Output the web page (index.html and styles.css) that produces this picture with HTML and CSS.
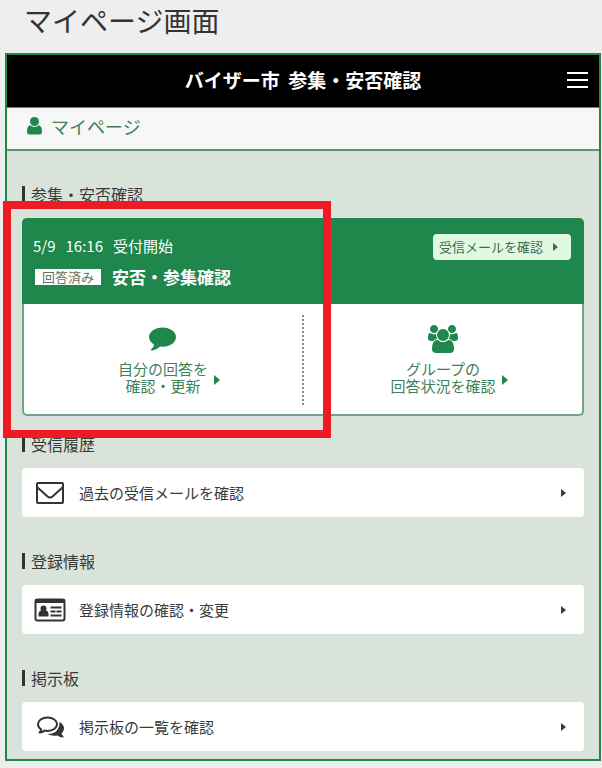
FILE: index.html
```html
<!DOCTYPE html>
<html lang="ja">
<head>
    <meta charset="UTF-8">
    <meta name="viewport" content="width=device-width, initial-scale=1.0">
    <title>マイページ画面</title>
    <link rel="stylesheet" href="styles.css">
</head>
<body>
    <h1 class="page-title">マイページ画面</h1>

    <div class="app">
        <header class="app-header">
            <h2 class="app-name">バイザー市 <span class="app-sub">参集・安否確認</span></h2>
            <button class="menu-btn" type="button" aria-label="メニュー">
                <span class="menu-line"></span>
                <span class="menu-line"></span>
                <span class="menu-line"></span>
            </button>
        </header>

        <div class="breadcrumb">
            <svg class="icon-user" viewBox="0 0 15 18" aria-hidden="true">
                <circle cx="7.500" cy="4.500" r="4.500"/>
                <path d="M3 8.300q4.500 3.400 9 0 3 .8 3 6.200 0 3-2.500 3h-10q-2.500 0-2.500-3 0-5.400 3-6.200z"/>
            </svg>
            <span>マイページ</span>
        </div>

        <main class="content">
            <h3 class="section-title">参集・安否確認</h3>
            <div class="card-wrap">
                <div class="card">
                    <div class="card-head">
                        <div>
                            <p class="card-time"><span>5/9</span> <span>16:16</span> <span>受付開始</span></p>
                            <p class="card-title"><span class="badge">回答済み</span>安否・参集確認</p>
                        </div>
                        <button class="mail-btn" type="button">受信メールを確認<span class="arrow"></span></button>
                    </div>
                    <div class="card-body">
                        <a class="card-link" href="#">
                            <svg class="icon-comment" viewBox="0 256 1792 1536" aria-hidden="true">
                                <path d="M1792 896q0 174-120 321.5t-326 233-450 85.5q-70 0-145-8-198 175-460 242-49 14-114 22h-5q-15 0-27-10.5t-16-27.5v-1q-3-4-.5-12t2-10 4.5-9.5l6-9 7-8.5 8-9q7-8 31-34.5t34.5-38 31-39.5 32.5-51 27-59 26-76q-157-89-247.5-220t-90.5-281q0-130 71-248.5t191-204.5 286-136.5 348-50.5 348 50.5 286 136.5 191 204.5 71 248.5z"/>
                            </svg>
                            <span class="card-link-text"><span>自分の回答を</span><span>確認・更新</span></span>
                            <span class="arrow arrow-lg"></span>
                        </a>
                        <a class="card-link" href="#">
                            <svg class="icon-group" viewBox="0 0 1920 1792" aria-hidden="true">
                                <path d="M593 896q-162 5-265 128h-134q-82 0-138-40.5t-56-118.5q0-353 124-353 6 0 43.5 21t97.5 42.5 119 21.5q67 0 133-23-5 37-5 66 0 139 81 256zm1071 637q0 120-73 189.5t-194 69.5h-874q-121 0-194-69.5t-73-189.5q0-53 3.5-103.5t14-109 26.5-108.5 43-97.5 62-81 85.5-53.5 111.5-20q10 0 43 21.5t73 48 107 48 135 21.5 135-21.5 107-48 73-48 43-21.5q61 0 111.5 20t85.5 53.5 62 81 43 97.5 26.5 108.5 14 109 3.5 103.5zm-1024-1277q0 106-75 181t-181 75-181-75-75-181 75-181 181-75 181 75 75 181zm704 384q0 159-112.5 271.5t-271.5 112.5-271.5-112.5-112.5-271.5 112.5-271.5 271.5-112.5 271.5 112.5 112.5 271.5zm576 225q0 78-56 118.5t-138 40.5h-134q-103-123-265-128 81-117 81-256 0-29-5-66 66 23 133 23 59 0 119-21.5t97.5-42.5 43.5-21q124 0 124 353zm-128-609q0 106-75 181t-181 75-181-75-75-181 75-181 181-75 181 75 75 181z"/>
                            </svg>
                            <span class="card-link-text"><span>グループの</span><span>回答状況を確認</span></span>
                            <span class="arrow arrow-lg"></span>
                        </a>
                    </div>
                </div>
                <!-- red frame around the answer side -->
                <div class="highlight"></div>
            </div>

            <h3 class="section-title">受信履歴</h3>
            <a class="row" href="#">
                <svg class="row-icon" viewBox="0 0 32 24" aria-hidden="true">
                    <rect class="line" x="3" y="2" width="26" height="20" rx="1"/>
                    <path class="line" d="M3 6 L13.500 15.500 Q16 17.500 18.500 15.500 L29 6"/>
                </svg>
                <span class="row-text">過去の受信メールを確認</span>
                <span class="arrow"></span>
            </a>

            <h3 class="section-title">登録情報</h3>
            <a class="row" href="#">
                <svg class="row-icon" viewBox="0 0 32 24" aria-hidden="true">
                    <rect class="line" x="1.500" y="1.500" width="29" height="21" rx="2"/>
                    <path d="M1 1h30v4H1z"/>
                    <circle cx="9.500" cy="10.500" r="3"/>
                    <path d="M4.500 18.500v-2q0-3.500 2.500-4h5q2.500 .5 2.500 4v2z"/>
                    <path class="line" d="M16.500 9.500h11M16.500 13.500h5M22.500 13.500h5M16.500 17.500h11"/>
                </svg>
                <span class="row-text">登録情報の確認・変更</span>
                <span class="arrow"></span>
            </a>

            <h3 class="section-title">掲示板</h3>
            <a class="row" href="#">
                <svg class="row-icon" viewBox="0 0 32 24" aria-hidden="true">
                    <path d="M25.500 7q4.500 2.500 4.500 6.500 0 3-2.500 5 .5 1.500 2 3 .5 1-.5 1-3 0-5.500-2-6 1-10-1.500 12 0 12-12z"/>
                    <path class="line" d="M13.500 2.500c5.500 0 9.500 3 9.500 6.700s-4 6.700-9.500 6.700q-1.500 0-3-.3-2 1.600-5 1.900 1.400-1.300 1.700-3.200-3.200-2-3.200-5.100c0-3.700 4-6.700 9.500-6.700z"/>
                </svg>
                <span class="row-text">掲示板の一覧を確認</span>
                <span class="arrow"></span>
            </a>
        </main>
    </div>
</body>
</html>
```
FILE: styles.css
```css
* {
    margin: 0;
    padding: 0;
    box-sizing: border-box;
}

body {
    background: #eeeeee;
    color: #3a3a3a;
    font-family: "Noto Sans CJK JP", "Noto Sans", sans-serif;
    font-size: 15px;
    padding: 0 1px 6px 5px;
}

a {
    color: inherit;
    text-decoration: none;
}

button {
    border: none;
    font-family: inherit;
    cursor: pointer;
}

.page-title {
    padding: 0 19px 13px;
    font-size: 28px;
    font-weight: 400;
    line-height: 40px;
    color: #333;
}

.app {
    border: 2px solid #1f864c;
    background: #d9e3da;
}

/* Header */
.app-header {
    display: grid;
    grid-template-columns: 1fr auto 1fr;
    align-items: center;
    height: 53px;
    padding: 0 11px 2px;
    background: #000;
    border-bottom: 1px solid #777;
}

.app-name {
    grid-column: 2;
    font-size: 19px;
    line-height: 24px;
    color: #fff;
}

.app-sub {
    margin-left: 4px;
}

.menu-btn {
    justify-self: end;
    display: flex;
    flex-direction: column;
    gap: 5px;
    width: 21px;
    background: none;
}

.menu-line {
    height: 2px;
    background: #fff;
}

.breadcrumb {
    display: flex;
    align-items: center;
    gap: 9px;
    height: 43px;
    padding: 0 20px 5px;
    background: #f7f7f7;
    border-bottom: 2px solid #5d9373;
    font-size: 18px;
    line-height: 24px;
    color: #3f7f5a;
}

.icon-user {
    width: 15px;
    height: 18px;
    fill: #1f864c;
}

.content {
    padding: 15px 15px 8px;
}

.section-title {
    margin: 36px 0 16px;
    padding-left: 6px;
    border-left: 3px solid #333;
    font-size: 16px;
    font-weight: 400;
    line-height: 16px;
}

.section-title:first-child {
    margin-top: 20px;
}

.card-wrap + .section-title {
    margin-top: 20px;
}

/* Status card */
.card-wrap {
    position: relative;
}

.card {
    border: 2px solid #6fa584;
    border-top: none;
    border-radius: 5px;
    background: #fff;
}

.card-head {
    display: flex;
    justify-content: space-between;
    align-items: flex-start;
    margin: 0 -2px;
    padding: 16px 13px 15px 11px;
    border-radius: 5px 5px 0 0;
    background: #1f864c;
    color: #fff;
}

.card-time {
    display: flex;
    gap: 10px;
    margin-bottom: 7px;
    line-height: 24px;
}

.card-title {
    display: flex;
    align-items: center;
    gap: 11px;
    padding-left: 2px;
    font-size: 17px;
    font-weight: 700;
    line-height: 24px;
}

.badge {
    padding: 0 7px;
    background: #fff;
    color: #6b705c;
    font-size: 13px;
    font-weight: 400;
    line-height: 16px;
}

.mail-btn {
    display: flex;
    align-items: center;
    gap: 10px;
    padding: 1px 13px 1px 6px;
    border-radius: 4px;
    background: #e0fae2;
    color: #3f6b50;
    font-size: 13px;
    line-height: 24px;
}

.card-body {
    display: flex;
    padding: 11px 0 9px;
}

.card-link {
    flex: 1;
    display: grid;
    grid-template-columns: 1fr auto 1fr;
    grid-template-rows: 24px auto;
    row-gap: 9px;
    column-gap: 6px;
    align-items: center;
    padding: 12px 0 11px;
    color: #3f7f5a;
}

.card-link + .card-link {
    border-left: 2px dotted #7d8f84;
}

.card-link svg {
    grid-column: 2;
    justify-self: center;
    fill: #1f864c;
}

.icon-comment {
    width: 27px;
    height: 24px;
}

.icon-group {
    width: 30px;
    height: 28px;
}

.card-link-text {
    grid-column: 2;
    text-align: center;
    line-height: 17px;
}

.card-link-text span {
    display: block;
}

/* Small triangle on links */
.arrow {
    border-style: solid;
    border-width: 4px 0 4px 5px;
    border-color: transparent transparent transparent currentColor;
}

.arrow-lg {
    justify-self: start;
    margin-top: 6px;
    border-width: 5px 0 5px 6px;
    color: #1f864c;
}

.highlight {
    position: absolute;
    top: -17px;
    right: calc(50% - 28px);
    bottom: -22px;
    left: -19px;
    border: 8px solid #ed1c24;
    pointer-events: none;
}

/* Menu rows */
.row {
    display: flex;
    align-items: center;
    min-height: 49px;
    padding: 0 18px 0 12px;
    border-radius: 4px;
    background: #fff;
}

.row-icon {
    width: 32px;
    height: 24px;
    fill: #333;
}

.row-icon .line {
    fill: none;
    stroke: #333;
    stroke-width: 2;
    stroke-linejoin: round;
}

.row-text {
    flex: 1;
    padding-left: 13px;
    line-height: 24px;
}
```
